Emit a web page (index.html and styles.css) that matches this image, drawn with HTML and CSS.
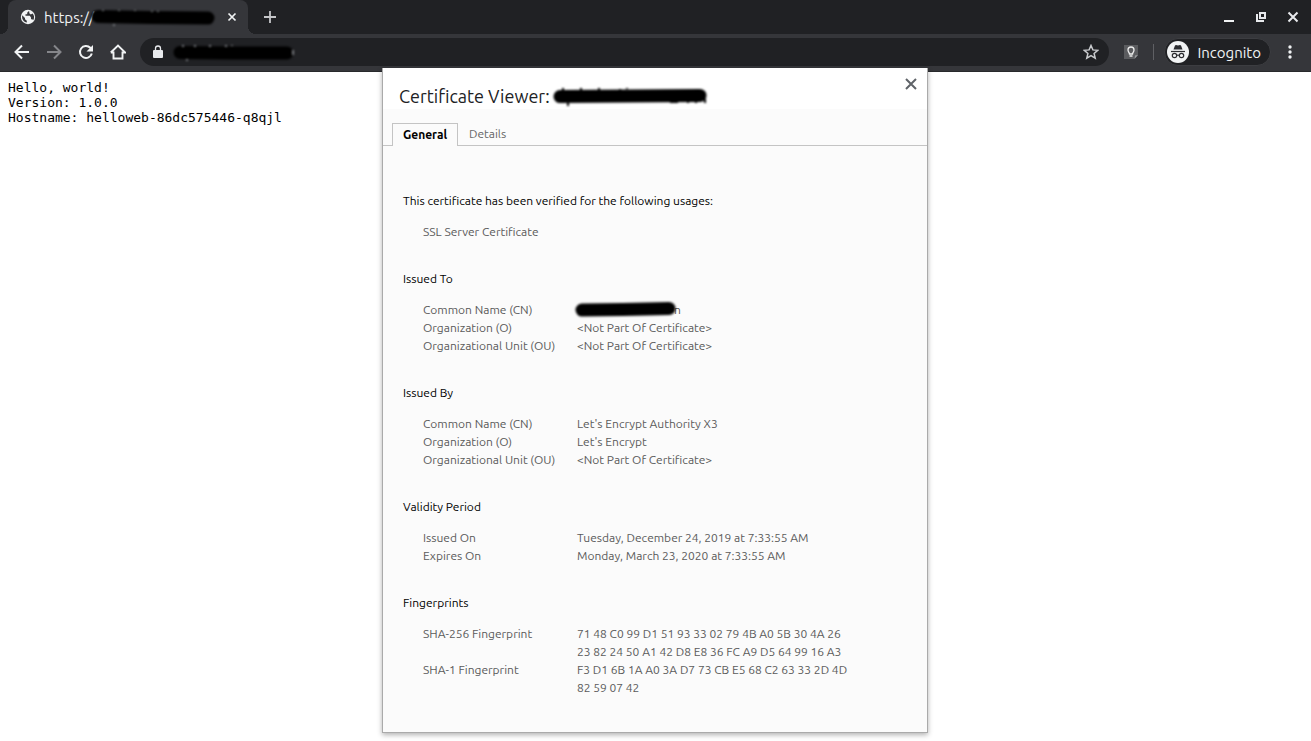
FILE: index.html
```html
<!DOCTYPE html>
<html lang="en">
<head>
<meta charset="utf-8">
<title>Certificate Viewer</title>
<link rel="stylesheet" href="styles.css">
</head>
<body>
<header class="browser">
  <div class="tabstrip">
    <div class="tab">
      <svg class="icon" viewBox="0 0 16 16" aria-hidden="true"><circle cx="8" cy="8" r="7.2" fill="#f1f3f4"/><path d="M2.2 6.2 5 9v1.2l1.8 1.5v1.8C4 13 1.500 10.500 2.200 6.200zM8.500 2.200 7.200 3.700v1.500H5.500v1.600h4.300l1.200 1.600v1.800h1.300l.9 1c1.500-2.400 1-5-.6-6.700L10.800 5.500 9.300 4.200V2.500z" fill="#35363a"/></svg>
      <span class="tab-title">https://</span>
      <svg class="ink ink-tab" viewBox="0 0 128 18" aria-hidden="true"><path d="M8 8.500 60 9.500 118 10"/><path class="fleck fleck-light" d="M13 2v1M24 16v2M29 2v1M45 2v1M62 3v1M68 3v1"/></svg>
      <button class="tab-close" aria-label="Close tab"><svg class="icon-sm" viewBox="0 0 10 10"><path d="m1.500 1.500 7 7m0-7-7 7" stroke="#f1f3f4" stroke-width="1.700"/></svg></button>
    </div>
    <button class="new-tab" aria-label="New tab"><svg class="icon-md" viewBox="0 0 14 14"><path d="M7 1v12M1 7h12" stroke="#c5c6c9" stroke-width="1.800"/></svg></button>
    <div class="window-controls">
      <button aria-label="Minimize"><svg class="icon-md" viewBox="0 0 14 14"><path d="M2 11h10" stroke="#f1f3f4" stroke-width="2"/></svg></button>
      <button aria-label="Restore"><svg class="icon-md" viewBox="0 0 14 14"><path d="M6 3h5v5H6zM3 4v7h7" fill="none" stroke="#e8eaed" stroke-width="2"/></svg></button>
      <button aria-label="Close window"><svg class="icon-md" viewBox="0 0 14 14"><path d="m2.500 2.500 9 9m0-9-9 9" stroke="#e8eaed" stroke-width="2"/></svg></button>
    </div>
  </div>
  <div class="toolbar">
    <nav class="nav">
      <button aria-label="Back"><svg class="icon" viewBox="0 0 16 16"><path d="M15 8H2.500M8 1.500 1.500 8 8 14.500" fill="none" stroke="#f1f3f4" stroke-width="2"/></svg></button>
      <button aria-label="Forward"><svg class="icon" viewBox="0 0 16 16"><path d="M1 8h12.500M8 1.500 14.500 8 8 14.500" fill="none" stroke="#85868a" stroke-width="2"/></svg></button>
      <button aria-label="Reload"><svg class="icon" viewBox="0 0 16 16"><path d="M13.800 9.500A6 6 0 1 1 12.300 3.800L14 5.500" fill="none" stroke="#f1f3f4" stroke-width="2"/><path d="M15 1v6.500H8.500z" fill="#f1f3f4"/></svg></button>
      <button aria-label="Home"><svg class="icon" viewBox="0 0 16 16"><path d="M3.500 7.500v7h9v-7M.8 8.500 8 1.500l7.200 7H12.500M3.500 8.500H.8" fill="none" stroke="#f1f3f4" stroke-width="1.900"/></svg></button>
    </nav>
    <div class="omnibox">
      <svg class="lock" viewBox="0 0 10 14" aria-hidden="true"><path d="M1 5h8q1 0 1 1v6q0 1-1 1H1q-1 0-1-1V6q0-1 1-1z" fill="#e8eaed"/><path d="M2.500 6V3.500a2.500 2.500 0 0 1 5 0V6" fill="none" stroke="#e8eaed" stroke-width="1.300"/></svg>
      <svg class="ink ink-url" viewBox="0 0 124 18" aria-hidden="true"><path d="M8 9.500 60 10 115 10"/><path class="fleck fleck-light" d="M11 2v2M15 16v2M23 2v2M38 2v2M54 2v2M60 2v1M121 7v5"/></svg>
      <input class="url" type="text" aria-label="Address">
      <button class="star" aria-label="Bookmark this page"><svg class="icon" viewBox="0 0 16 16"><path d="m8 1.500 1.900 4.400 4.800.4-3.600 3.200 1.100 4.700L8 11.700l-4.200 2.500 1.100-4.700L1.300 6.300l4.800-.4z" fill="none" stroke="#c9cbce" stroke-width="1.500"/></svg></button>
    </div>
    <button class="extension" aria-label="Extension"><svg class="icon" viewBox="0 0 16 16"><path d="M1 1h14v10l-4 4H1z" fill="#5b5c5f"/><path d="m11.500 15 .5-3.500 3-.5z" fill="#9a9b9e"/><path d="M6.500 10C6.500 8.500 5 8 5 6a3 3 0 0 1 6 0c0 2-1.500 2.500-1.500 4zM6.500 12h3" fill="none" stroke="#eee" stroke-width="1.300"/></svg></button>
    <span class="divider"></span>
    <button class="profile">
      <svg class="avatar" viewBox="0 0 22 22" aria-hidden="true"><circle cx="11" cy="11" r="11" fill="#f1f3f4"/><path d="M6.500 8.500 8 4.500l1-.5 2 .5 2-.5 1 .5 1.500 4z" fill="#2b2c30"/><path d="M4 10.500h14" stroke="#2b2c30" stroke-width="1.200"/><g fill="none" stroke="#2b2c30" stroke-width="1.200"><circle cx="7.500" cy="14.500" r="2.200"/><circle cx="14.500" cy="14.500" r="2.200"/><path d="M9.700 14.500q1.300-1 2.600 0"/></g></svg>
      <span>Incognito</span>
    </button>
    <button class="menu" aria-label="Menu"><svg class="icon" viewBox="0 0 16 16"><g fill="#f1f3f4"><circle cx="8" cy="3" r="1.700"/><circle cx="8" cy="8" r="1.700"/><circle cx="8" cy="13" r="1.700"/></g></svg></button>
  </div>
</header>
<main>
<pre class="output">Hello, world!
Version: 1.0.0
Hostname: helloweb-86dc575446-q8qjl</pre>
</main>
<section class="dialog" role="dialog" aria-labelledby="dialog-title">
  <header class="dialog-head">
    <h1 id="dialog-title">Certificate Viewer:</h1>
    <svg class="ink ink-title" viewBox="0 0 160 18" aria-hidden="true"><path d="M10 9.500 80 9 150 8.500"/><path class="fleck" d="M13 1v2M18 16v3M31 1v2M49 1v2M70 2v2M77 1v1M120 15h8M138 15v1M146 14v2M155 12v4"/></svg>
    <button class="dialog-close" aria-label="Close"><svg class="icon-md" viewBox="0 0 14 14"><path d="m2 2 10 10m0-10L2 12" stroke="#5f6368" stroke-width="2"/></svg></button>
  </header>
  <div class="tabs" role="tablist">
    <button class="tab-btn selected" role="tab" aria-selected="true">General</button>
    <button class="tab-btn" role="tab" aria-selected="false">Details</button>
  </div>
  <div class="panel" role="tabpanel">
    <section class="group">
      <h2>This certificate has been verified for the following usages:</h2>
      <p>SSL Server Certificate</p>
    </section>
    <section class="group">
      <h2>Issued To</h2>
      <dl>
        <dt>Common Name (CN)</dt><dd class="redacted"><svg class="ink ink-name" viewBox="0 0 108 18" aria-hidden="true"><path d="M9 9 50 8.500 96 7.500"/></svg><span>n</span></dd>
        <dt>Organization (O)</dt><dd>&lt;Not Part Of Certificate&gt;</dd>
        <dt>Organizational Unit (OU)</dt><dd>&lt;Not Part Of Certificate&gt;</dd>
      </dl>
    </section>
    <section class="group">
      <h2>Issued By</h2>
      <dl>
        <dt>Common Name (CN)</dt><dd>Let's Encrypt Authority X3</dd>
        <dt>Organization (O)</dt><dd>Let's Encrypt</dd>
        <dt>Organizational Unit (OU)</dt><dd>&lt;Not Part Of Certificate&gt;</dd>
      </dl>
    </section>
    <section class="group">
      <h2>Validity Period</h2>
      <dl>
        <dt>Issued On</dt><dd>Tuesday, December 24, 2019 at 7:33:55 AM</dd>
        <dt>Expires On</dt><dd>Monday, March 23, 2020 at 7:33:55 AM</dd>
      </dl>
    </section>
    <section class="group">
      <h2>Fingerprints</h2>
      <dl>
        <dt>SHA-256 Fingerprint</dt><dd>71 48 C0 99 D1 51 93 33 02 79 4B A0 5B 30 4A 26<br>23 82 24 50 A1 42 D8 E8 36 FC A9 D5 64 99 16 A3</dd>
        <dt>SHA-1 Fingerprint</dt><dd>F3 D1 6B 1A A0 3A D7 73 CB E5 68 C2 63 33 2D 4D<br>82 59 07 42</dd>
      </dl>
    </section>
  </div>
</section>
</body>
</html>
```
FILE: styles.css
```css
* { box-sizing: border-box; }
body { margin: 0; background: #fff; font-family: Ubuntu, "Noto Sans", sans-serif; min-height: 100vh; }
button { border: 0; padding: 0; margin: 0; background: none; font: inherit; color: inherit; display: flex; align-items: center; justify-content: center; }
svg { display: block; flex: none; }
.icon { width: 16px; height: 16px; }
.icon-md { width: 14px; height: 14px; }
.icon-sm { width: 10px; height: 10px; }
.ink { fill: none; stroke: #000; stroke-width: 13px; stroke-linecap: round; stroke-linejoin: round; filter: blur(1px); height: 18px; overflow: visible; }
.fleck { stroke-width: 2px; stroke-linecap: butt; }
.fleck-light { stroke: #77797d; }

.browser { background: #35363a; color: #f1f3f4; border-bottom: 1px solid #28292c; }
.tabstrip { display: flex; align-items: stretch; height: 34px; background: #202124; padding-left: 8px; }
.tab { position: relative; display: flex; align-items: center; width: 240px; padding: 0 11px 0 12px; background: #35363a; border-radius: 8px 8px 0 0; font-size: 15px; }
.tab::before, .tab::after { content: ""; position: absolute; bottom: 0; width: 8px; height: 8px; }
.tab::before { right: 100%; background: radial-gradient(circle at 0 0, #202124 8px, #35363a 8px); }
.tab::after { left: 100%; background: radial-gradient(circle at 100% 0, #202124 8px, #35363a 8px); }
.tab-title { margin-left: 8px; width: 46px; white-space: nowrap; }
.ink-tab { width: 128px; }
.tab-close { margin-left: auto; }
.new-tab { margin-left: 15px; }
.window-controls { display: flex; gap: 18px; margin-left: auto; padding-right: 11px; }

.toolbar { display: flex; align-items: center; height: 37px; padding: 0 13px 1px 14px; }
.nav { display: flex; gap: 16px; }
.omnibox { display: flex; align-items: center; flex: 1; height: 28px; margin-left: 14px; padding: 0 10px 0 13px; border-radius: 14px; background: #202124; }
.lock { width: 10px; height: 14px; }
.ink-url { width: 124px; margin-left: 9px; }
.url { flex: 1; min-width: 0; border: 0; outline: 0; background: transparent; color: #e8eaed; font: inherit; }
.extension { margin-left: 14px; }
.divider { width: 1px; height: 16px; margin: 0 10px 0 14px; background: #5f6064; }
.profile { gap: 8px; height: 28px; padding: 0 9px 0 2px; border: 1px solid #3c3d41; border-radius: 14px; background: #202124; font-size: 15px; }
.avatar { width: 22px; height: 22px; }
.menu { margin-left: 11px; }

.output { margin: 0; padding: 8px; font: 13px/15px "DejaVu Sans Mono", monospace; color: #000; }

.dialog { position: absolute; top: 68px; left: 0; right: 1px; width: 546px; margin: 0 auto; padding-bottom: 35px; background: #fbfbfb; border: 1px solid #aaa; border-top: 0; box-shadow: 0 2px 5px rgba(0, 0, 0, .3); color: #5a5a5a; font-size: 12px; line-height: 18px; }
.dialog-head { display: flex; align-items: center; height: 41px; padding: 14px 9px 0 16px; background: #fff; }
.dialog-head h1 { margin: 0; color: #202124; font-size: 18px; font-weight: 400; line-height: 24px; }
.ink-title { width: 160px; }
.dialog-close { align-self: flex-start; margin: -5px 0 0 auto; }
.tabs { display: flex; height: 37px; padding: 14px 9px 0; border-bottom: 1px solid #c4c4c4; }
.tab-btn { height: 22px; padding: 0 11px; color: #666; }
.tab-btn.selected { width: 66px; height: 23px; padding: 0; border: 1px solid #c4c4c4; border-bottom: 0; background: #fbfbfb; color: #000; font-weight: 700; }
.panel { padding: 46px 20px 0; }
.group + .group { margin-top: 29px; }
.group h2 { margin: 0 0 13px; color: #000; font-size: inherit; font-weight: 400; }
.group p { margin: 0 0 0 20px; }
.group dl { display: grid; grid-template-columns: 154px 1fr; margin: 0 0 0 20px; }
.group dt, .group dd { margin: 0; }
.redacted { display: flex; height: 18px; }
.ink-name { width: 108px; margin: 0 -7px 0 -4px; z-index: 1; }
```
